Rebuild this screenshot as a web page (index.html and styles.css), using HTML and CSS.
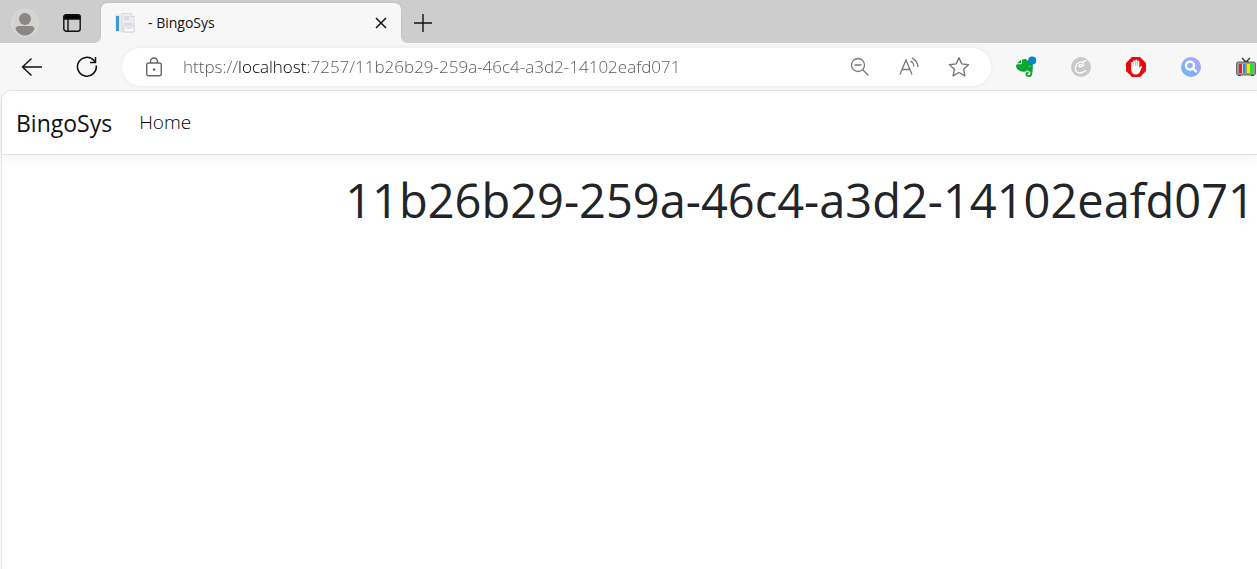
FILE: index.html
```html
<!DOCTYPE html>
<html lang="en">
<head>
    <meta charset="UTF-8" />
    <meta name="viewport" content="width=device-width, initial-scale=1.0" />
    <title>- BingoSys</title>
    <link rel="stylesheet" href="styles.css">
</head>
<body>
    <div class="tab-strip">
        <button class="icon-btn profile" aria-label="Profile">
            <svg width="28" height="28" viewBox="0 0 28 28">
                <circle cx="14" cy="14" r="13.5" fill="#d5d3d0" stroke="#dedcd9" />
                <circle cx="14" cy="10" r="6" fill="#8b8784" />
                <path d="M4.500 20c0-2 1.500-3 4-3h11c2.500 0 4 1 4 3-2 4-5.500 6.500-9.500 6.500s-7.500-2.500-9.500-6.500z" fill="#8b8784" />
            </svg>
        </button>
        <button class="icon-btn" aria-label="Tab actions">
            <svg width="18" height="18" viewBox="0 0 18 18" fill="none" stroke="#111" stroke-width="1.400">
                <rect x=".8" y=".8" width="16.400" height="16.400" rx="2.500" />
                <path d="M1 3a2 2 0 0 1 2-2h12a2 2 0 0 1 2 2v2H1z" fill="#000" />
                <path d="M5 5v12" />
            </svg>
        </button>
        <div class="tab">
            <svg width="20" height="20" viewBox="0 0 20 20">
                <path d="M0 1h12v18H0z" fill="#e8eaec" />
                <path d="M1 3h3v15H1z" fill="#3c9bd6" />
                <path d="M7 .5h9l3 3V19H7z" fill="#eceef2" stroke="#d3d6dc" stroke-width=".8" />
                <path d="M9 4h5M9 6h5M9 11h8" stroke="#c5cad3" />
                <path d="M16 .5v3h3" fill="#fff" stroke="#c0c4cc" stroke-width=".7" />
                <path d="M9 13h10v6H9z" fill="#fafbff" stroke="#cfd3dd" />
                <path d="M11 15h6" stroke="#c1c6d3" />
            </svg>
            <span class="tab-title">- BingoSys</span>
            <button class="icon-btn" aria-label="Close tab">
                <svg width="12" height="12" viewBox="0 0 12 12" stroke="#111" stroke-width="1.500">
                    <path d="M1 1l10 10M11 1L1 11" />
                </svg>
            </button>
        </div>
        <button class="icon-btn new-tab" aria-label="New tab">
            <svg width="18" height="18" viewBox="0 0 18 18" stroke="#111" stroke-width="1.400">
                <path d="M9 0v18M0 9h18" />
            </svg>
        </button>
    </div>

    <div class="toolbar">
        <button class="icon-btn" aria-label="Back">
            <svg width="22" height="22" viewBox="0 0 22 22" fill="none" stroke="#111" stroke-width="1.400">
                <path d="M10.500 2.500L1.500 11l9 8.500M1.500 11H21" />
            </svg>
        </button>
        <button class="icon-btn" aria-label="Refresh">
            <svg width="22" height="22" viewBox="0 0 22 22" fill="none" stroke="#111" stroke-width="1.500">
                <path d="M20.200 9.500A9.400 9.400 0 1 1 18 4.600l1.500 1.800" />
                <path d="M19.500 1v5.500H14" />
            </svg>
        </button>
        <div class="address-bar">
            <svg width="18" height="20" viewBox="0 0 18 20" fill="none" stroke="#666" stroke-width="1.400">
                <rect x="1.700" y="6" width="14.600" height="12.800" rx="2" />
                <path d="M5.500 6V4.500a3.500 3.500 0 0 1 7 0V6" />
                <circle cx="9" cy="12.500" r="1.200" fill="#666" stroke="none" />
            </svg>
            <input class="url" type="text" aria-label="Address" value="https://localhost:7257/11b26b29-259a-46c4-a3d2-14102eafd071" />
            <div class="address-actions">
                <button class="icon-btn" aria-label="Zoom out">
                    <svg width="20" height="20" viewBox="0 0 20 20" fill="none" stroke="#777" stroke-width="1.300">
                        <circle cx="8" cy="8" r="6.500" />
                        <path d="M12.700 12.700L18.500 18.500M4.500 8h7" />
                    </svg>
                </button>
                <button class="icon-btn" aria-label="Read aloud">
                    <svg width="20" height="20" viewBox="0 0 20 20" fill="none" stroke="#777" stroke-width="1.300">
                        <path d="M1 17.500L7 3l6 14.500M3 12.500h8" />
                        <path d="M11.500 4q3 1.700 3.300 5.500M13 .8q5.500 2.700 6 9.200" />
                    </svg>
                </button>
                <button class="icon-btn" aria-label="Add to favorites">
                    <svg width="22" height="22" viewBox="0 0 22 22" fill="none" stroke="#777" stroke-width="1.400" stroke-linejoin="round">
                        <path d="M11 1.800l2.800 6.100 6.700.8-4.900 4.500 1.300 6.600-5.900-3.300-5.900 3.300 1.300-6.600-4.900-4.500 6.700-.8z" />
                    </svg>
                </button>
            </div>
        </div>
        <div class="extensions">
            <button class="icon-btn" aria-label="Web clipper">
                <svg width="22" height="22" viewBox="0 0 22 22">
                    <path d="M6 3.800v2.700q0 .8-.8.800H2z" fill="#0ba52f" />
                    <path d="M7 4.500q0-1.300 1.500-1.300 3-.5 4 1.300 4.500 0 5 2c.6 3 .4 8-.4 12-.4 2-1.600 2.500-3.100 2.500-2.500 0-3.500-1.200-3.500-2.800 0-1.700 1-2.500 3-2.500v1.800c-1.500-.1-1.500 1.700.6 1.700 1.400 0 1.500-1.500 1.300-3-.3-1.300-2.400-1-3.400-2-.8 1.800-3 1.800-5 1.400C4 15 1 13 1 9.800q0-1.500 1.200-1.500h3.300Q7 8.300 7 6.800z" fill="#0ba52f" />
                    <path d="M13.500 11q1.200-1.500 2.500-.2z" fill="#f7f7f7" />
                    <circle cx="17.200" cy="4.500" r="4" fill="#0784ca" />
                </svg>
            </button>
            <button class="icon-btn" aria-label="Coupons">
                <svg width="22" height="22" viewBox="0 0 22 22" fill="none" stroke="#fff" stroke-width="1.300" stroke-linecap="round">
                    <circle cx="11" cy="11" r="10" fill="#c9c9c9" stroke="none" />
                    <path d="M9 10.500c2.500.8 5.500-1 4.500-3.200C12 4.500 6.500 6.500 5.500 11c-.8 4 1.500 6.500 4.500 6 2-.3 4.300-1.200 5.500-2.300M9 10.500c-.2-1.500 1.500-2.500 2.500-1.800M12.500 6.200q2-1.500 3.500-1.500" />
                </svg>
            </button>
            <button class="icon-btn" aria-label="Ad blocker">
                <svg width="22" height="22" viewBox="0 0 22 22">
                    <path d="M7 1h8l6 6v8l-6 6H7l-6-6V7z" fill="#e9090c" />
                    <path d="M6.200 13V6.500q.8-1.300 1.700 0V10h.3V4.800q.8-1.300 1.800 0V10h.3V4q.9-1.200 1.900 0v6h.3V5.200q.8-1.200 1.800 0V12l1-1.600q1.500-.8 1.700.4L15 15.500q-1 3-4 3-4.800 0-4.800-5.500z" fill="#fff" />
                </svg>
            </button>
            <button class="icon-btn" aria-label="Image search">
                <svg width="22" height="22" viewBox="0 0 22 22">
                    <defs>
                        <linearGradient id="lens" x1="1" y1="0" x2="0" y2="1">
                            <stop offset="0" stop-color="#b5a4fa" />
                            <stop offset="1" stop-color="#62b9fd" />
                        </linearGradient>
                    </defs>
                    <circle cx="11" cy="11" r="10" fill="url(#lens)" />
                    <circle cx="10" cy="9.500" r="4" fill="none" stroke="#fff" stroke-width="2.400" />
                    <path d="M13 12.500l3 3" stroke="#fff" stroke-width="2.400" stroke-linecap="round" />
                </svg>
            </button>
            <button class="icon-btn" aria-label="TV">
                <svg width="22" height="22" viewBox="0 0 22 22">
                    <path d="M7 2l3 3M15 2l-3 3" stroke="#333" stroke-width="1.300" />
                    <path d="M8 6q3-3 6 0z" fill="#222" />
                    <rect x="1.500" y="6" width="19" height="13" rx="1.500" fill="#999" stroke="#666" />
                    <path d="M4 8h3v9H4z" fill="#ed1c24" />
                    <path d="M7 8h1v9H7z" fill="#ddd" />
                    <path d="M8 8h2v9H8z" fill="#168fe0" />
                    <path d="M10 8h3v9h-3z" fill="#b59b31" />
                    <path d="M12 8h3v9h-3z" fill="#ffe600" />
                    <path d="M15 8h3v9h-3z" fill="#22e03d" />
                    <path d="M3 19.500h3M16 19.500h3" stroke="#444" />
                </svg>
            </button>
        </div>
    </div>

    <div class="page">
        <header>
            <nav class="navbar">
                <a class="navbar-brand" href="#">BingoSys</a>
                <a class="nav-link" href="#">Home</a>
            </nav>
        </header>
        <main>
            <h1>11b26b29-259a-46c4-a3d2-14102eafd071</h1>
        </main>
    </div>
</body>
</html>
```
FILE: styles.css
```css
* {
    box-sizing: border-box;
}

body {
    margin: 0;
    min-height: 100vh;
    display: flex;
    flex-direction: column;
    overflow: hidden;
    background-color: #f7f7f7;
    color: #212529;
    font-family: "Open Sans", "Noto Sans", sans-serif;
}

svg {
    display: block;
}

.icon-btn {
    flex: none;
    padding: 0;
    border: none;
    background: none;
    cursor: pointer;
}

/* tabs */
.tab-strip {
    display: flex;
    align-items: center;
    height: 43px;
    padding: 3px 0 0 11px;
    background-color: #cdcdcd;
}

.profile {
    margin-right: 24px;
}

.tab {
    position: relative;
    display: flex;
    align-items: center;
    width: 300px;
    height: 40px;
    margin-left: 20px;
    padding: 0 14px;
    border-radius: 6px 6px 0 0;
    background-color: #f7f7f7;
    box-shadow: 0 0 2px #aaa;
}

/* curved feet of the active tab */
.tab::before,
.tab::after {
    content: "";
    position: absolute;
    bottom: 0;
    width: 5px;
    height: 5px;
}

.tab::before {
    right: 100%;
    background: radial-gradient(circle at 0 0, #cdcdcd 4px, #f7f7f7 5px);
}

.tab::after {
    left: 100%;
    background: radial-gradient(circle at 100% 0, #cdcdcd 4px, #f7f7f7 5px);
}

.tab-title {
    flex: 1;
    margin-left: 13px;
    padding-bottom: 1px;
    color: #111;
    font-size: 14px;
}

.new-tab {
    margin-left: 13px;
}

/* toolbar */
.toolbar {
    position: relative;
    display: flex;
    align-items: center;
    height: 47px;
    padding-left: 21px;
    background-color: #f7f7f7;
}

.toolbar > .icon-btn {
    margin-right: 33px;
}

.address-bar {
    flex: 1;
    display: flex;
    align-items: center;
    height: 38px;
    margin-left: -9px;
    padding: 0 21px 0 23px;
    border-radius: 19px;
    background-color: #fff;
    box-shadow: 0 0 4px #e6e6e6;
}

/* the host part of the address is darker than the rest */
.url {
    flex: 1;
    min-width: 0;
    margin-left: 20px;
    padding: 0;
    border: none;
    outline: none;
    background: linear-gradient(90deg, #555 56px, #000 56px, #000 124px, #555 124px);
    -webkit-background-clip: text;
    background-clip: text;
    color: transparent;
    caret-color: #111;
    font-family: inherit;
    font-size: 17px;
    font-weight: 300;
}

.address-actions {
    display: flex;
    align-items: center;
    gap: 29px;
}

.extensions {
    display: flex;
    gap: 33px;
    margin-left: 24px;
}

/* site */
.page {
    flex: 1;
    margin-left: 1px;
    border: 1px solid #e6e6e6;
    border-right: none;
    border-bottom: none;
    border-top-left-radius: 10px;
    background-color: #fff;
}

.navbar {
    display: flex;
    align-items: center;
    gap: 27px;
    height: 64px;
    padding: 0 14px;
    border-bottom: 1px solid #dee2e6;
    box-shadow: 0 4px 12px rgba(0, 0, 0, 0.05);
}

.navbar a {
    text-decoration: none;
}

.navbar-brand {
    color: #111;
    font-size: 23px;
}

.nav-link {
    padding-bottom: 1px;
    color: #000;
    font-size: 19px;
    font-weight: 300;
}

main {
    padding: 15px 2px;
}

h1 {
    margin: 0;
    font-size: 47px;
    font-weight: 400;
    line-height: 60px;
    text-align: right;
    white-space: nowrap;
}
```
